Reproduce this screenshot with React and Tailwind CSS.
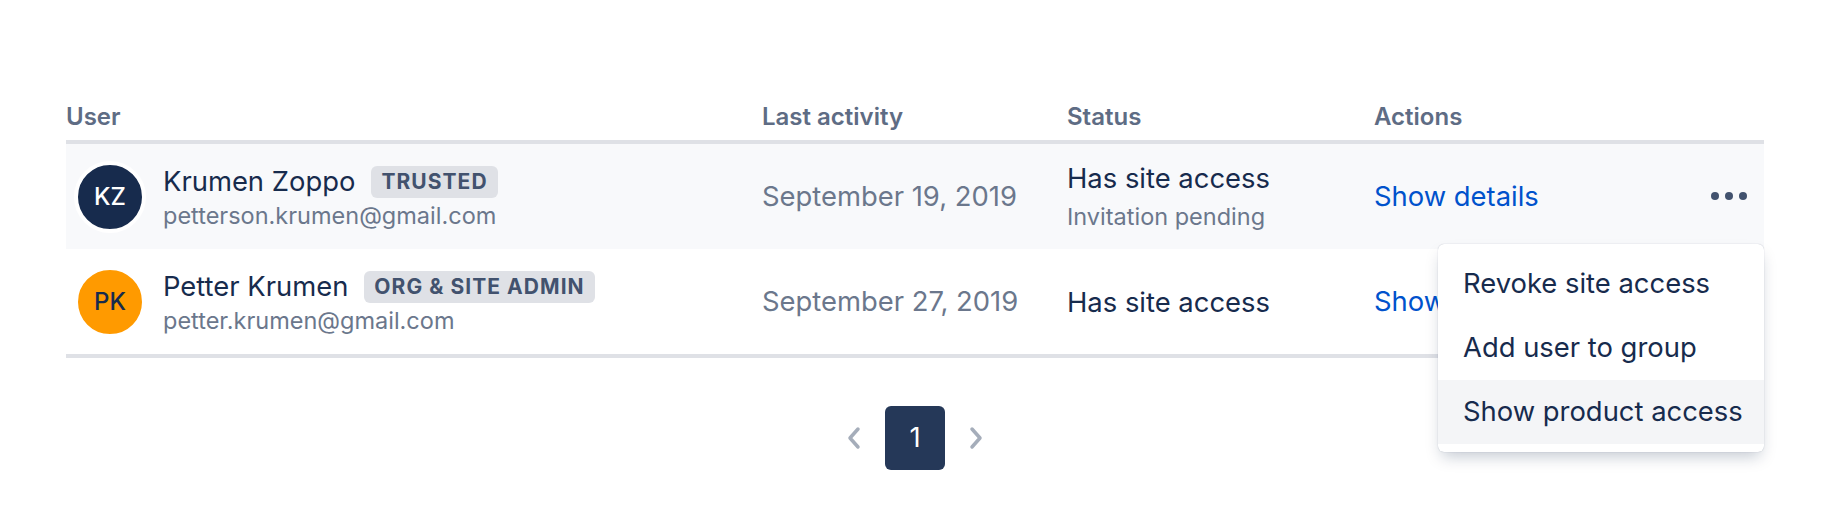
const users = [
  {
    initials: "KZ",
    name: "Krumen Zoppo",
    badge: "Trusted",
    email: "petterson.krumen@gmail.com",
    lastActivity: "September 19, 2019",
    status: "Has site access",
    note: "Invitation pending",
    avatar: "bg-[#172b4d] text-white",
    highlighted: true,
  },
  {
    initials: "PK",
    name: "Petter Krumen",
    badge: "Org & site admin",
    email: "petter.krumen@gmail.com",
    lastActivity: "September 27, 2019",
    status: "Has site access",
    note: null,
    avatar: "bg-[#ff9a00] text-[#172b4d]",
    highlighted: false,
  },
];

const menuItems = ["Revoke site access", "Add user to group", "Show product access"];

const cols = "grid grid-cols-[696px_305px_307px_390px]";

function Avatar({ initials, className }) {
  return (
    <div
      className={`w-[72px] h-[72px] shrink-0 rounded-full border-4 border-white flex items-center justify-center text-[24px] font-medium ${className}`}
    >
      {initials}
    </div>
  );
}

function Dots() {
  return (
    <div className="flex gap-[6px] mr-[17px]">
      <span className="w-2 h-2 rounded-full bg-[#42526e]" />
      <span className="w-2 h-2 rounded-full bg-[#42526e]" />
      <span className="w-2 h-2 rounded-full bg-[#42526e]" />
    </div>
  );
}

function Chevron({ left }) {
  return (
    <svg width="14" height="24" viewBox="0 0 14 24" fill="none">
      <path
        d={left ? "M11 3 L3 12 L11 21" : "M3 3 L11 12 L3 21"}
        stroke="#a5adba"
        strokeWidth="3.5"
        strokeLinecap="round"
        strokeLinejoin="round"
      />
    </svg>
  );
}

export default function App() {
  return (
    <div className="w-[1830px] h-[520px] bg-white font-['Inter',sans-serif] antialiased">
      <div className="pt-[101px] px-[66px]">
        <div className="relative">
          {/* table header */}
          <div className={`${cols} border-b-4 border-[#dfe1e6] pb-[7px] text-[24px] leading-8 font-semibold text-[#5e6c84]`}>
            <div>User</div>
            <div>Last activity</div>
            <div>Status</div>
            <div>Actions</div>
          </div>

          {users.map((u) => (
            <div
              key={u.email}
              className={`${cols} h-[105px] items-center ${u.highlighted ? "bg-[#f8f9fb]" : ""}`}
            >
              <div className="flex items-center pl-2">
                <Avatar initials={u.initials} className={u.avatar} />
                <div className="ml-[17px] flex flex-col mt-[2px]">
                  <div className="flex items-center gap-4 h-9">
                    <span className="text-[27.4px] text-[#172b4d]">{u.name}</span>
                    <span className="h-8 px-[10px] rounded-[6px] bg-[#dfe1e6] text-[#42526e] text-[21px] tracking-[0.05em] leading-8 font-bold uppercase">
                      {u.badge}
                    </span>
                  </div>
                  <span className="text-[23.5px] leading-8 text-[#6b778c]">{u.email}</span>
                </div>
              </div>
              <div className="text-[27.4px] text-[#6b778c]">{u.lastActivity}</div>
              <div className="flex flex-col">
                <span className="text-[27.4px] leading-9 text-[#172b4d]">{u.status}</span>
                {u.note && (
                  <span className="mt-[5px] text-[23.5px] leading-8 text-[#6b778c]">{u.note}</span>
                )}
              </div>
              <div className="flex items-center justify-between">
                <span className="text-[27.4px] text-[#0052cc]">Show details</span>
                {u.highlighted && <Dots />}
              </div>
            </div>
          ))}
          <div className="h-1 bg-[#dfe1e6]" />

          {/* actions dropdown */}
          <div className="absolute right-0 top-[143px] w-[326px] py-2 bg-white rounded-[6px] shadow-[0_8px_16px_-4px_rgba(9,30,66,0.25),0_0_1px_rgba(9,30,66,0.31)] z-10">
            {menuItems.map((item, i) => (
              <div
                key={item}
                className={`h-16 flex items-center pl-[25px] text-[27.4px] text-[#172b4d] ${i === 2 ? "bg-[#f4f5f7]" : ""}`}
              >
                {item}
              </div>
            ))}
          </div>
        </div>

        {/* pagination */}
        <div className="mt-12 flex items-center justify-center gap-[24px]">
          <Chevron left />
          <div className="w-[60px] h-16 rounded-[6px] bg-[#253858] flex items-center justify-center text-white text-[27.4px]">
            1
          </div>
          <Chevron />
        </div>
      </div>
    </div>
  );
}
